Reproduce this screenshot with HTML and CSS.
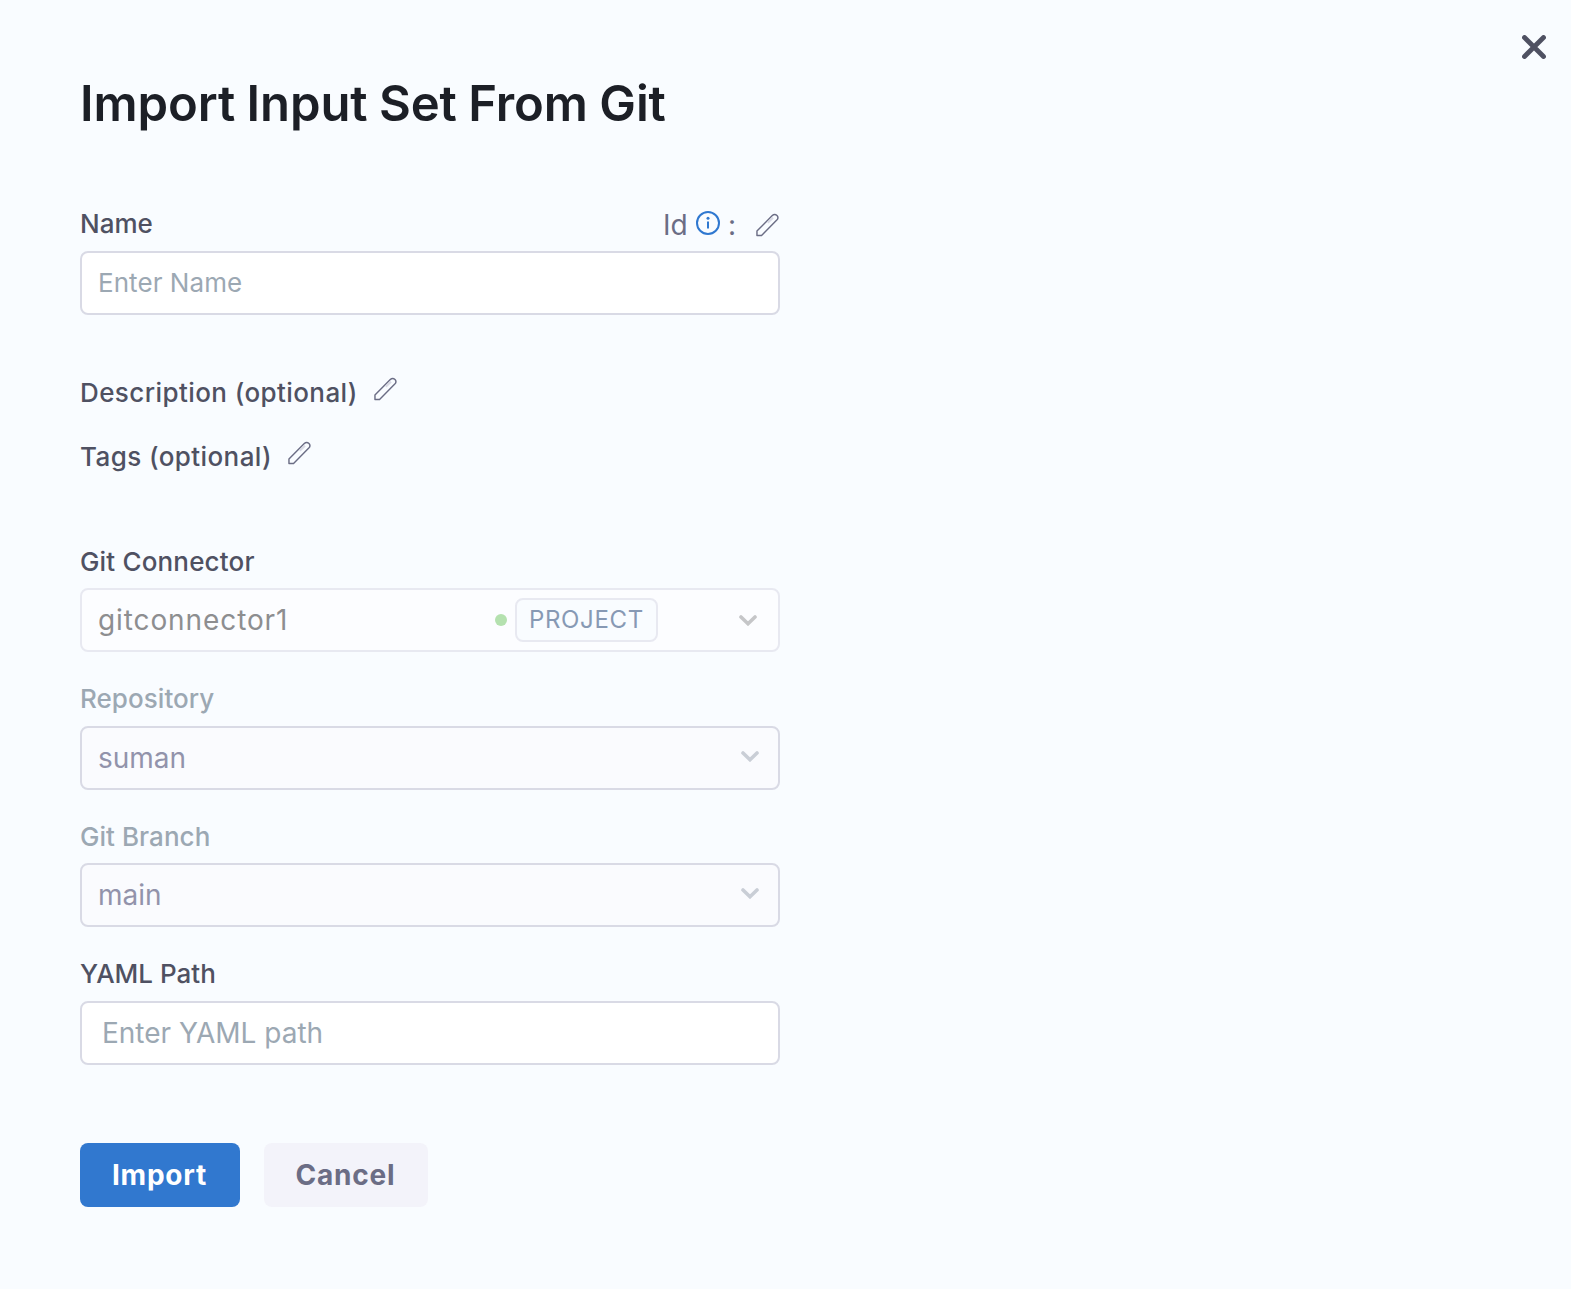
FILE: index.html
```html
<!DOCTYPE html>
<html lang="en">
<head>
<meta charset="utf-8">
<title>Import Input Set From Git</title>
<link rel="stylesheet" href="styles.css">
</head>
<body>
<svg class="sprite" aria-hidden="true">
  <symbol id="pencil" viewBox="0 0 24 24">
    <path d="M1 23V18.2L17 2.2Q19.4-.2 21.9 2.1Q24 4.4 21.7 6.9L5.8 23Z" fill="none" stroke="#6b6d85" stroke-width="1.5" stroke-linejoin="round"/>
    <path d="M12.3 9.7L17.8 4.4" stroke="#d9dae5" stroke-width="2"/>
  </symbol>
  <symbol id="chevron" viewBox="0 0 18 11">
    <path d="M2 2L9 8.7L16 2" fill="none" stroke="currentColor" stroke-width="3.6" stroke-linecap="round"/>
  </symbol>
</svg>
<main class="dialog">
  <button class="close" aria-label="Close">
    <svg width="24" height="24" viewBox="0 0 24 24"><path d="M2.5 2.5L21.5 21.5M21.5 2.5L2.5 21.5" stroke="#4f5162" stroke-width="4.8" stroke-linecap="round"/></svg>
  </button>
  <h1 class="title">Import Input Set From Git</h1>
  <form class="form">
    <div class="field name-field">
      <div class="label-row">
        <label class="label">Name</label>
        <div class="identifier">
          <span class="id-text">Id</span>
          <svg class="info" width="24" height="24" viewBox="0 0 24 24" fill="none" stroke="#2f78d0"><circle cx="12" cy="12" r="11" stroke-width="2"/><path d="M12 10.6V17.6" stroke-width="2"/><circle cx="12" cy="7.2" r="1.5" fill="#2f78d0" stroke="none"/></svg>
          <span class="colon">:</span>
          <svg class="pencil"><use href="#pencil"/></svg>
        </div>
      </div>
      <div class="input placeholder small"><span>Enter Name</span></div>
    </div>
    <div class="toggles">
      <div class="toggle"><span class="label wide">Description (optional)</span><svg class="pencil"><use href="#pencil"/></svg></div>
      <div class="toggle"><span class="label wide">Tags (optional)</span><svg class="pencil"><use href="#pencil"/></svg></div>
    </div>
    <div class="git-fields">
      <div class="field">
        <label class="label spaced">Git Connector</label>
        <div class="input connector">
          <span class="connector-name">gitconnector1</span>
          <span class="dot"></span>
          <span class="badge">PROJECT</span>
          <svg class="chevron"><use href="#chevron"/></svg>
        </div>
      </div>
      <div class="field">
        <label class="label muted">Repository</label>
        <div class="input disabled"><span>suman</span><svg class="chevron"><use href="#chevron"/></svg></div>
      </div>
      <div class="field">
        <label class="label muted">Git Branch</label>
        <div class="input disabled"><span>main</span><svg class="chevron"><use href="#chevron"/></svg></div>
      </div>
      <div class="field">
        <label class="label">YAML Path</label>
        <div class="input placeholder path"><span>Enter YAML path</span></div>
      </div>
    </div>
    <div class="actions">
      <button type="button" class="button primary">Import</button>
      <button type="button" class="button secondary">Cancel</button>
    </div>
  </form>
</main>
</body>
</html>
```
FILE: styles.css
```css
* { box-sizing: border-box; }

body {
  margin: 0;
  background: #f9fcff;
  font-family: Inter, "Liberation Sans", sans-serif;
  font-size: 28px;
  color: #4f5162;
}

.sprite { position: absolute; width: 0; height: 0; }

.dialog { min-height: 1289px; padding: 74px 80px 0; }

.close {
  position: absolute;
  top: 35px;
  right: 25px;
  width: 24px;
  height: 24px;
  padding: 0;
  border: 0;
  background: none;
}
.close svg { display: block; }

.title {
  margin: 0 0 74px;
  font-size: 49px;
  line-height: 60px;
  font-weight: 600;
  letter-spacing: -0.1px;
  word-spacing: -0.8px;
  color: #1c1f26;
  white-space: nowrap;
}

.form { width: 700px; }

.field { display: flex; flex-direction: column; gap: 10.5px; }
.name-field { gap: 11px; }

.label {
  font-size: 26px;
  line-height: 32px;
  font-weight: 500;
  color: #4f5162;
  white-space: nowrap;
}
.label.muted { color: #9ca8b3; letter-spacing: 0.05px; }
.label.wide { letter-spacing: 0.41px; }
.label.spaced { letter-spacing: 0.17px; }

.label-row { display: flex; justify-content: space-between; height: 32px; }

.identifier {
  display: flex;
  align-items: center;
  color: #6b6d85;
  line-height: 32px;
}
.id-text { width: 33px; padding-top: 1px; }
.info { margin-top: -2px; margin-right: 8px; }
.colon { width: 28px; padding-top: 1px; }
.pencil { width: 23px; height: 24px; overflow: visible; flex: none; }
.identifier .pencil { margin: 2px 1px 0 0; }

.input {
  display: flex;
  align-items: center;
  height: 64px;
  padding: 0 19px 0 16px;
  border: 2px solid #d9dae5;
  border-radius: 8px;
  background: #fff;
  white-space: nowrap;
}
.placeholder { color: #9ca8b3; }
.small { font-size: 26px; padding-bottom: 2px; letter-spacing: 0.06px; }
.path { padding-left: 20px; }

.toggles {
  display: flex;
  flex-direction: column;
  gap: 32px;
  padding: 62px 0 64px;
}
.toggle { display: flex; gap: 16px; height: 32px; }

.git-fields { display: flex; flex-direction: column; gap: 31px; padding-top: 8.5px; }

.connector {
  border-color: #e8e9f1;
  background: #fcfdff;
  color: #8d8e90;
  padding-right: 21px;
}
.connector-name { width: 397px; letter-spacing: 0.9px; }
.dot { width: 12px; height: 12px; margin-right: 8px; border-radius: 50%; background: #b4e1af; }
.badge {
  width: 143px;
  height: 44px;
  padding-left: 12px;
  border: 2px solid #e8e9f1;
  border-radius: 8px;
  background: #f9fcff;
  color: #8799b4;
  font-size: 24px;
  line-height: 40px;
  letter-spacing: 0.65px;
}
.chevron { width: 18px; height: 11px; margin-left: auto; color: #c5c6c8; }

.disabled { background: #fafbfe; color: #9293ab; }
.disabled .chevron { color: #c9ced6; margin-top: -3px; }

.actions { display: flex; gap: 24px; padding-top: 78.5px; }
.button {
  height: 64px;
  padding: 0 1px 0 0;
  border: 0;
  border-radius: 8px;
  font: 700 28px/64px Inter, "Liberation Sans", sans-serif;
  letter-spacing: 0.8px;
}
.primary { width: 160px; background: #3178cf; color: #fff; }
.secondary { width: 164px; background: #f3f3fa; color: #6b6d85; }
```
